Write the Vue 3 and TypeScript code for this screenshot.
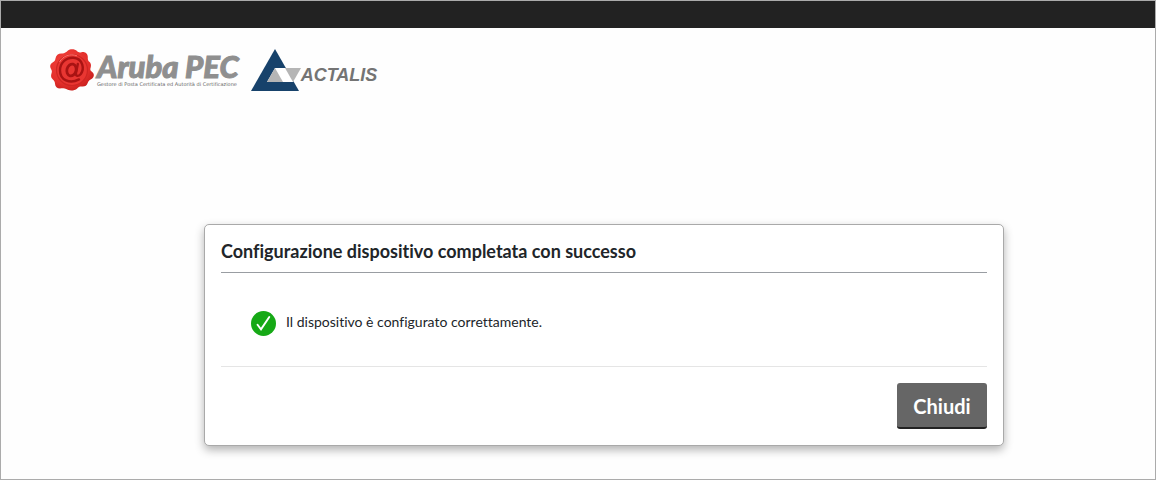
<script setup lang="ts">
import { ref } from 'vue'

const title = 'Configurazione dispositivo completata con successo'
const message = 'Il dispositivo è configurato correttamente.'
const open = ref<boolean>(true)

function closeDialog(): void {
  open.value = false
}
</script>

<template>
  <div class="page">
    <div class="topbar"></div>

    <header class="brands">
      <div class="aruba">
        <svg class="seal" viewBox="0 0 44 42" aria-hidden="true">
          <defs>
            <radialGradient id="wax" cx="40%" cy="35%" r="70%">
              <stop offset="0" stop-color="#f4453f" />
              <stop offset="0.7" stop-color="#e32f2b" />
              <stop offset="1" stop-color="#c51f1d" />
            </radialGradient>
          </defs>
          <path
            d="M18 1.500C20-.3 25-.2 27 2c1.400 1.500 2.500 1.600 4.500 1.200 4-.7 6.500 1.800 6.300 5.300-.1 2 .2 3 1.800 4.600 2 2 1.400 4.400.8 6.400-.3 1.400.2 2.400 1.800 3.500 2.500 2 2 5.500-.7 7-2 1-3 1.800-3.700 3.800-1 3-3 4-6 3.700-2-.2-3 .2-4.600 1.900-2.600 2.600-8.200 2.800-11 .7-1.500-1.100-2.700-1.100-4.500-.8-4 .6-6.500-1-6.700-4.600-.1-2-.6-3-2.100-4.300C.7 28.600.8 26.500 1.600 24c.5-1.500.3-2.500-.6-4-1.700-3-.6-5.400 2-6.800 1.600-.9 2.100-1.700 2.400-3.500C6 6 8.600 4.200 12 4.500c2.500.2 4-1.300 6-3z"
            fill="url(#wax)"
          />
          <circle cx="22" cy="21" r="15.500" fill="#e93632" stroke="#cf2623" stroke-width="1.200" />
          <path d="M9.500 13C13 6.800 20 4.300 27 6.800" fill="none" stroke="#fa716a" stroke-width="1" />
          <g fill="none" stroke="#a91313" stroke-linecap="round">
            <ellipse cx="21.500" cy="21" rx="4.600" ry="6" stroke-width="2.800" transform="rotate(15 21.500 21)" />
            <path d="M27.800 15l-1.800 9c-.5 3.500 2.400 3.700 4.600 1.200 4-4.700 2.700-15.800-7.300-16.400-7.600-.4-13.300 5.400-13.300 12.600 0 9.600 9.800 14 19 9" stroke-width="2.400" />
          </g>
        </svg>
        <div class="aruba-words">
          <span class="aruba-name">Aruba PEC</span>
          <span class="aruba-tag">Gestore di Posta Certificata ed Autorità di Certificazione</span>
        </div>
      </div>

      <div class="actalis">
        <svg class="triangle" viewBox="0 0 50 42" aria-hidden="true">
          <path d="M24 0L0 42h48z" fill="#17426b" />
          <path d="M24 19h26l-8 14H16z" fill="#fff" />
          <path d="M24 19l8 14H16z" fill="#b5b5b5" />
          <path d="M34 19h16l-8 14z" fill="#b5b5b5" />
        </svg>
        <span class="actalis-name">ACTALIS</span>
      </div>
    </header>

    <main class="content">
      <section v-if="open" class="card" aria-labelledby="card-title">
        <h1 id="card-title" class="card-title">{{ title }}</h1>
        <div class="card-body">
          <svg class="check" viewBox="0 0 26 26" aria-hidden="true">
            <circle cx="13" cy="13" r="13" fill="#16a916" />
            <path d="M6.800 14.300l3.600 4.800L19 6.300" fill="none" stroke="#fff" stroke-width="2" stroke-linecap="round" />
          </svg>
          <p class="message">{{ message }}</p>
        </div>
        <footer class="card-footer">
          <button type="button" class="close" @click="closeDialog">Chiudi</button>
        </footer>
      </section>
    </main>
  </div>
</template>

<style>
body {
  margin: 0;
  background: #fefefe;
}
</style>

<style scoped>
.page {
  box-sizing: border-box;
  min-height: 100vh;
  border: 1px solid #ababab;
  background: #fefefe;
  color: #212529;
  font-family: Lato, "Liberation Sans", sans-serif;
  font-variant-ligatures: none;
}

.topbar {
  height: 27px;
  background: #222;
}

.brands {
  display: flex;
  gap: 12px;
  padding: 21px 49px 0;
}

.aruba,
.actalis {
  display: flex;
  height: 42px;
}

.aruba {
  gap: 3px;
}

.seal {
  width: 44px;
  height: 42px;
}

.aruba-words {
  display: flex;
  flex-direction: column;
  padding-top: 4px;
  white-space: nowrap;
}

.aruba-name {
  color: #8f8f8f;
  font-size: 31px;
  font-style: italic;
  font-weight: 900;
  line-height: 27px;
  -webkit-text-stroke: 1px #8f8f8f;
}

.aruba-tag {
  color: #666;
  font-family: "DejaVu Sans", sans-serif;
  font-size: 5px;
  line-height: 8px;
}

.actalis {
  align-items: center;
}

.triangle {
  width: 50px;
  height: 42px;
}

.actalis-name {
  padding-top: 10px;
  color: #747474;
  font: italic bold 18px/20px "Liberation Sans", sans-serif;
}

.content {
  padding: 133px 151px 33px 203px;
}

.card {
  box-sizing: border-box;
  max-width: 800px;
  padding: 16px;
  border: 1px solid #a9a9a9;
  border-radius: 5px;
  background: #fff;
  box-shadow: 0 4px 10px rgba(0, 0, 0, 0.3);
}

.card-title {
  margin: 0;
  padding-bottom: 10px;
  border-bottom: 1px solid #999da2;
  font-size: 18px;
  font-weight: 700;
  line-height: 21px;
}

.card-body {
  display: flex;
  align-items: flex-start;
  gap: 10px;
  padding: 38px 30px 30px;
  border-bottom: 1px solid #e5e5e5;
}

.check {
  width: 25px;
  height: 25px;
}

.message {
  margin: 0;
  font-size: 14px;
  line-height: 22px;
}

.card-footer {
  display: flex;
  justify-content: flex-end;
  padding-top: 16px;
}

.close {
  min-width: 90px;
  height: 46px;
  padding: 2px 15px 0;
  border: 0;
  border-bottom: 2px solid #222;
  border-radius: 3px;
  background: #666;
  color: #fff;
  font-family: inherit;
  font-size: 20px;
  font-weight: 700;
  cursor: pointer;
}
</style>
